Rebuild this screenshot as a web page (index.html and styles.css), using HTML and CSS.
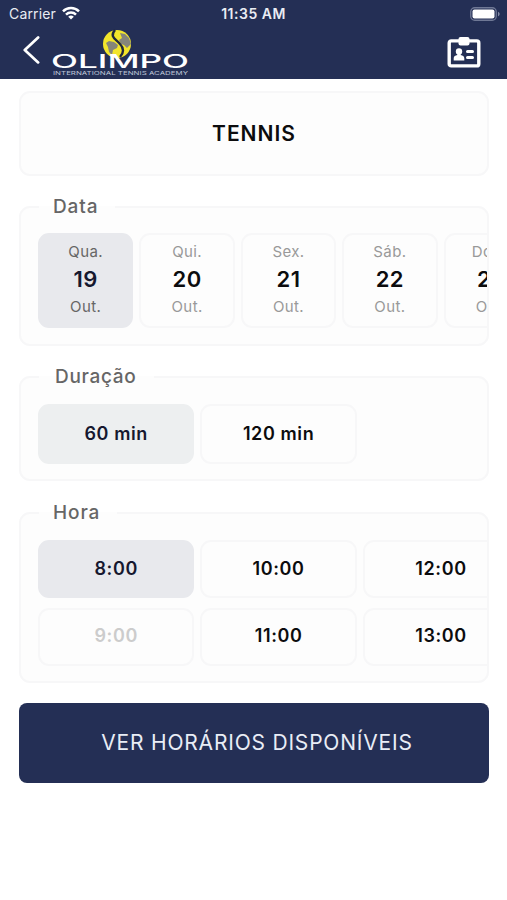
FILE: index.html
```html
<!DOCTYPE html>
<html lang="pt">
<head>
    <meta charset="UTF-8">
    <meta name="viewport" content="width=device-width, initial-scale=1.0">
    <title>Olimpo - Tennis</title>
    <link rel="stylesheet" href="styles.css">
</head>
<body>
    <header class="header">
        <div class="status-bar">
            <div class="carrier">
                <span>Carrier</span>
                <svg class="wifi" viewBox="0 0 18 14" fill="none" stroke="currentColor" stroke-width="2.5">
                    <path d="M1 5.4a11.4 11.4 0 0 1 16 0"/>
                    <path d="M4 8.6a7.2 7.2 0 0 1 10 0"/>
                    <path d="M9 13.6L6.2 10.8a4 4 0 0 1 5.6 0z" fill="currentColor" stroke="none"/>
                </svg>
            </div>
            <div class="time">11:35 AM</div>
            <svg class="battery" viewBox="0 0 30 14">
                <rect x=".75" y=".75" width="25.5" height="12.5" rx="4" fill="none" stroke="#6f7895" stroke-width="1.3"/>
                <rect x="2.5" y="2.5" width="22" height="9" rx="2" fill="#fff"/>
                <path d="M28 4.7c2.2.8 2.2 3.8 0 4.6z" fill="#8189a4"/>
            </svg>
        </div>
        <div class="nav-bar">
            <a href="#" class="back">
                <svg viewBox="0 0 16 27" fill="none" stroke="currentColor" stroke-width="2.6" stroke-linecap="round" stroke-linejoin="round">
                    <path d="M14.4 1.4L1.5 13.5l12.9 12"/>
                </svg>
            </a>
            <svg class="logo" viewBox="0 0 138 48">
                <circle cx="65" cy="16" r="14" fill="#f2e52b"/>
                <path d="M54 15l3-2 5 1 4 3-1 3-4 2-1 5-3-3-1-5zM68 5l5 1 4 4 2 6-4 4-3-3-3-1-2-4 3-2z" fill="#85857a"/>
                <path d="M63 2c-6 7 1 9 5 14 4 4 4 9 0 13" fill="none" stroke="#20283c" stroke-width="2.4"/>
                <text class="logo-name" x="-1" y="39.5" textLength="138" lengthAdjust="spacingAndGlyphs">OLIMPO</text>
                <text class="logo-sub" x="1" y="46.5" textLength="135" lengthAdjust="spacingAndGlyphs">INTERNATIONAL TENNIS ACADEMY</text>
            </svg>
            <a href="#" class="badge">
                <svg viewBox="0 0 34 32">
                    <rect x="2.2" y="4.9" width="29.6" height="25" rx="2" fill="none" stroke="#fff" stroke-width="3.4"/>
                    <rect x="11.5" y="1" width="11" height="8.5" rx="2" fill="#fff"/>
                    <circle cx="12" cy="15.4" r="3.2" fill="#fff"/>
                    <path d="M10.3 16h3.4v3c2 .5 3.6 1.3 3.6 3.3v2.1H6.7v-2.1c0-2 1.6-2.800 3.600-3.300z" fill="#fff"/>
                    <path d="M20.500 15.500h5M20.500 21.500h5" stroke="#fff" stroke-width="3" stroke-linecap="round"/>
                </svg>
            </a>
        </div>
    </header>

    <main class="container">
        <h1 class="title-card">TENNIS</h1>

        <fieldset class="group">
            <legend>Data</legend>
            <div class="scroller">
                <div class="day selected"><span>Qua.</span><strong>19</strong><span>Out.</span></div>
                <div class="day"><span>Qui.</span><strong>20</strong><span>Out.</span></div>
                <div class="day"><span>Sex.</span><strong>21</strong><span>Out.</span></div>
                <div class="day"><span>Sáb.</span><strong>22</strong><span>Out.</span></div>
                <div class="day"><span>Dom.</span><strong>23</strong><span>Out.</span></div>
            </div>
        </fieldset>

        <fieldset class="group group-duration">
            <legend>Duração</legend>
            <div class="scroller">
                <div class="option selected">60 min</div>
                <div class="option">120 min</div>
            </div>
        </fieldset>

        <fieldset class="group group-hours">
            <legend>Hora</legend>
            <div class="scroller hours">
                <div class="option selected">8:00</div>
                <div class="option disabled">9:00</div>
                <div class="option">10:00</div>
                <div class="option">11:00</div>
                <div class="option">12:00</div>
                <div class="option">13:00</div>
            </div>
        </fieldset>

        <button class="btn-primary">VER HORÁRIOS DISPONÍVEIS</button>
    </main>
</body>
</html>
```
FILE: styles.css
```css
:root {
    --primary-color: #242f55;
    --text-color: #0c0c0e;
    --text-secondary: #666666;
    --text-muted: #999999;
    --card-background: #fdfdfd;
    --selected-background: #e8e9ed;
    --border-color: #f7f7f8;
    --radius: 11px;
}

* {
    margin: 0;
    padding: 0;
    box-sizing: border-box;
}

body {
    font-family: Inter, "Liberation Sans", sans-serif;
    background-color: #fff;
    color: var(--text-color);
    overflow: hidden;
}

svg {
    display: block;
}

.header {
    height: 79px;
    background: var(--primary-color);
    color: #fff;
}

.status-bar {
    display: grid;
    grid-template-columns: 1fr auto 1fr;
    align-items: center;
    height: 27px;
    padding: 0 7px 0 9px;
    font-size: 14px;
    color: #e9ecf3;
}

.carrier {
    display: flex;
    align-items: center;
    gap: 6px;
    letter-spacing: 0.15px;
}

.wifi {
    width: 18px;
    height: 14px;
    margin-top: -1px;
    color: #fff;
}

.time {
    margin-left: -2px;
    font-weight: 600;
    letter-spacing: 0.5px;
}

.battery {
    width: 30px;
    height: 14px;
    justify-self: end;
}

.nav-bar {
    display: flex;
    align-items: flex-start;
    padding: 1px 26px 0 23px;
}

.back {
    margin-top: 8px;
    color: #fff;
}

.back svg {
    width: 17px;
    height: 28px;
}

.logo {
    width: 138px;
    height: 48px;
    margin-left: 12px;
}

.logo-name {
    font-family: Inter, sans-serif;
    font-size: 18px;
    font-weight: 500;
    fill: #fff;
}

.logo-sub {
    font-family: Inter, sans-serif;
    font-size: 5px;
    fill: #bfc6d8;
}

.badge {
    margin: 8px 0 0 auto;
}

.badge svg {
    width: 34px;
    height: 32px;
}

.container {
    padding: 12px 18px 0 19px;
}

.title-card {
    display: flex;
    align-items: center;
    justify-content: center;
    height: 85px;
    margin-bottom: 19px;
    background: var(--card-background);
    border: 2px solid var(--border-color);
    border-radius: var(--radius);
    font-size: 21px;
    font-weight: 600;
    letter-spacing: 1px;
}

.group {
    min-width: 0;
    margin-bottom: 19px;
    padding: 14px 0 16px 17px;
    background: var(--card-background);
    border: 2px solid var(--border-color);
    border-radius: var(--radius);
}

.group legend {
    padding: 0 17px 0 14px;
    margin-left: 1px;
    font-size: 19px;
    font-weight: 500;
    line-height: 24px;
    letter-spacing: 0.9px;
    color: var(--text-secondary);
}

.group-duration {
    padding-top: 15px;
    padding-bottom: 15px;
    margin-bottom: 20px;
}

.group-duration legend {
    padding-left: 16px;
    letter-spacing: 0.7px;
}

.group-hours {
    padding-top: 15px;
    padding-bottom: 15px;
    margin-bottom: 20px;
}

.scroller {
    display: flex;
    gap: 6px;
    overflow: hidden;
}

.day,
.option {
    display: flex;
    flex-shrink: 0;
    align-items: center;
    justify-content: center;
    background: var(--card-background);
    border: 2px solid var(--border-color);
    border-radius: var(--radius);
}

.day {
    flex-direction: column;
    gap: 5px;
    width: 95.4px;
    height: 95px;
    padding-bottom: 2px;
    font-size: 15px;
    line-height: 18px;
    letter-spacing: 0.4px;
    color: var(--text-muted);
}

.day strong {
    font-size: 22px;
    font-weight: 600;
    line-height: 27px;
    color: var(--text-color);
}

.option {
    width: 156.4px;
    height: 60px;
    padding-bottom: 2px;
    font-size: 18px;
    font-weight: 600;
    letter-spacing: 0.6px;
}

.hours {
    display: grid;
    grid-template-rows: repeat(2, 58px);
    grid-auto-flow: column;
    grid-auto-columns: 156.4px;
    row-gap: 9.5px;
}

.hours .option {
    height: 58px;
}

.selected {
    background: var(--selected-background);
    border-color: var(--selected-background);
    color: var(--text-secondary);
}

.option.selected,
.day.selected strong {
    color: #16182f;
}

.group-duration .selected {
    background: #edeff0;
    border-color: #edeff0;
}

.option.disabled {
    color: #cccccc;
}

.btn-primary {
    display: block;
    width: 100%;
    height: 80px;
    padding: 0 0 1px 6px;
    background: var(--primary-color);
    color: #e9edf6;
    border: none;
    border-radius: 8px;
    font-family: inherit;
    font-size: 21px;
    font-weight: 400;
    letter-spacing: 0.8px;
    cursor: pointer;
}
```
